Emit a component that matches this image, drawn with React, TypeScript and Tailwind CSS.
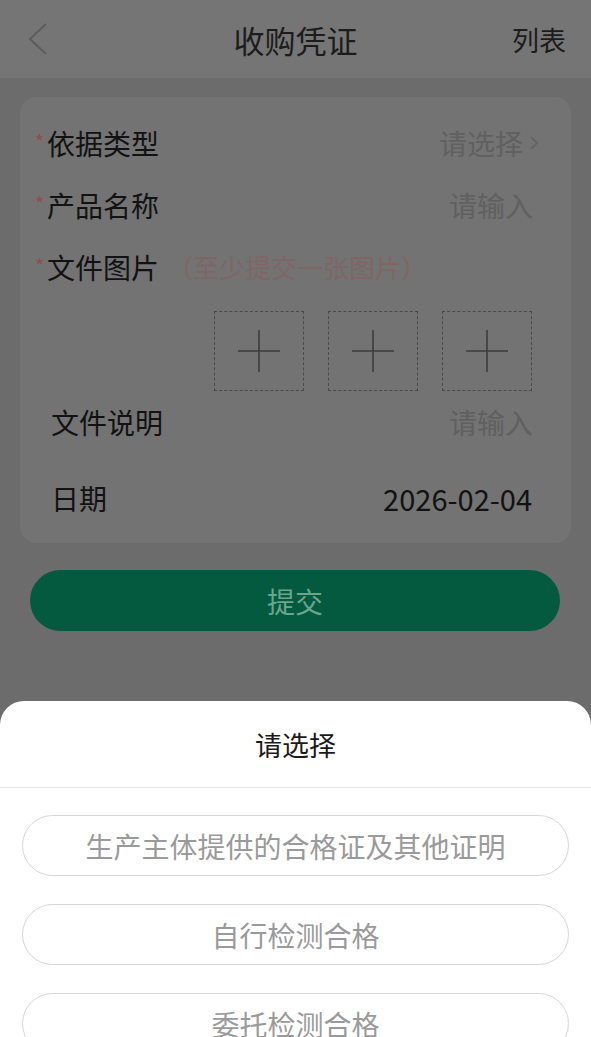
import React from 'react';

const font = { fontFamily: '"Noto Sans CJK SC", "Noto Sans", sans-serif' };

const Star = () => (
  <span className="w-[12px] -translate-y-[1px] text-[20px] leading-none text-[#944c4c]">*</span>
);

const Plus = () => (
  <svg width="44" height="44" viewBox="0 0 44 44">
    <path d="M1 22H43M22 1V43" stroke="#3d3d3d" strokeWidth="1.6" fill="none" />
  </svg>
);

const options = ['生产主体提供的合格证及其他证明', '自行检测合格', '委托检测合格'];

export default function App() {
  return (
    <div className="relative h-[1037px] w-[591px] overflow-hidden bg-[#6c6c6c]" style={font}>
      {/* header */}
      <header className="grid h-[78px] grid-cols-3 items-center bg-[#757575] px-[25px]">
        <svg width="24" height="34" viewBox="0 0 24 34">
          <path d="M21 2L5 17L21 32" stroke="#5c5c5c" strokeWidth="2" fill="none" />
        </svg>
        <h1 className="text-center text-[31px] leading-none text-[#1c1c1c]">收购凭证</h1>
        <span className="text-right text-[27px] leading-none text-[#1c1c1c]">列表</span>
      </header>

      <main className="px-[20px] pt-[19px]">
        <section className="rounded-[16px] bg-[#737373] pt-[15px] pb-[14px] text-[28px] leading-none text-[#121212]">
          <div className="flex h-[62px] items-center justify-between pl-[15px] pr-[32px]">
            <div className="flex items-center">
              <Star />
              <span>依据类型</span>
            </div>
            <div className="flex items-center gap-[6px] text-[#606060]">
              <span>请选择</span>
              <svg width="10" height="16" viewBox="0 0 10 16">
                <path d="M2 2L8 8L2 14" stroke="#606060" strokeWidth="1.5" fill="none" />
              </svg>
            </div>
          </div>
          <div className="flex h-[62px] items-center justify-between pl-[15px] pr-[38px]">
            <div className="flex items-center">
              <Star />
              <span>产品名称</span>
            </div>
            <span className="text-[#606060]">请输入</span>
          </div>
          <div className="flex h-[62px] items-center pl-[15px]">
            <Star />
            <span>文件图片</span>
            <span className="ml-[8px] text-[26px] text-[#7e6666]">（至少提交一张图片）</span>
          </div>
          <div className="mt-[13px] flex justify-end gap-[24px] pr-[39px]">
            {[0, 1, 2].map(i => (
              <div key={i} className="flex h-[80px] w-[90px] items-center justify-center border border-dashed border-[#4a4a4a]">
                <Plus />
              </div>
            ))}
          </div>
          <div className="flex h-[62px] items-center justify-between pl-[31px] pr-[38px]">
            <span>文件说明</span>
            <span className="text-[#606060]">请输入</span>
          </div>
          <div className="mt-[14px] flex h-[62px] items-center justify-between pl-[31px] pr-[39px]">
            <span>日期</span>
            <span className="text-[29px]">2026-02-04</span>
          </div>
        </section>

        <button className="mx-[10px] mt-[27px] flex h-[61px] w-[530px] items-center justify-center rounded-full bg-[#045a3e] text-[28px] leading-none text-[#6aa58d]">
          提交
        </button>
      </main>

      {/* bottom sheet */}
      <div className="absolute inset-x-0 top-[701px] bottom-0 rounded-t-[24px] bg-white">
        <div className="flex h-[87px] items-center justify-center border-b border-[#e6e6e6] text-[27px] leading-none text-[#1a1a1a]">
          请选择
        </div>
        <div className="flex flex-col gap-[28px] px-[22px] pt-[27px]">
          {options.map(o => (
            <div key={o} className="flex h-[61px] items-center justify-center rounded-full border border-[#d6d6d6] text-[28px] leading-none text-[#9a9a9a]">
              {o}
            </div>
          ))}
        </div>
      </div>
    </div>
  );
}
